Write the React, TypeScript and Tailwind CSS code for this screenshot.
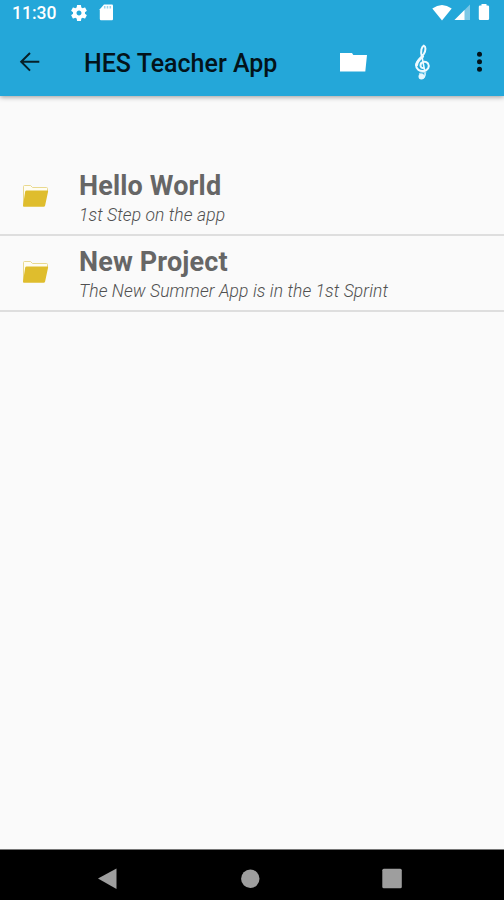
import type { ReactNode } from "react"

interface Project {
  id: number
  name: string
  description: string
}

const projects: Project[] = [
  { id: 1, name: "Hello World", description: "1st Step on the app" },
  { id: 2, name: "New Project", description: "The New Summer App is in the 1st Sprint" },
]

function StatusBar() {
  return (
    <div className="flex h-[26px] items-center pl-3 text-white">
      <span className="w-[59px] text-[17.5px] leading-[26px] font-medium whitespace-nowrap">11:30</span>
      <svg className="mt-[-1px] h-[16px] w-[16px]" viewBox="2 2 20 20" fill="currentColor">
        <path d="M19.43 12.98c.04-.32.07-.64.07-.98s-.03-.66-.07-.98l2.11-1.65c.19-.15.24-.42.12-.64l-2-3.46c-.12-.22-.39-.3-.61-.22l-2.49 1c-.52-.4-1.08-.73-1.69-.98l-.38-2.65C14.46 2.18 14.25 2 14 2h-4c-.25 0-.46.18-.49.42l-.38 2.65c-.61.25-1.17.59-1.69.98l-2.49-1c-.23-.09-.49 0-.61.22l-2 3.46c-.13.22-.07.49.12.64l2.11 1.65c-.04.32-.07.65-.07.98s.03.66.07.98l-2.11 1.65c-.19.15-.24.42-.12.64l2 3.46c.12.22.39.3.61.22l2.49-1c.52.4 1.08.73 1.69.98l.38 2.65c.03.24.24.42.49.42h4c.25 0 .46-.18.49-.42l.38-2.65c.61-.25 1.17-.59 1.69-.98l2.49 1c.23.09.49 0 .61-.22l2-3.46c.12-.22.07-.49-.12-.64l-2.11-1.65zM12 15.1c-1.7 0-3.1-1.4-3.1-3.1s1.4-3.1 3.1-3.1 3.1 1.4 3.1 3.1-1.4 3.1-3.1 3.1z" />
      </svg>
      <svg className="mt-[-1px] ml-[12px] h-[17px] w-[15px]" viewBox="0 0 15 17">
        <path d="M5 .5h8q1 0 1 1.300V15q0 1.300-1 1.300H2Q.8 16.300.8 15V5.200z" fill="#fff" />
        <path d="M5.7 2v2.5M8.500 2v2.500M11.300 2v2.500" stroke="#9bd3ea" strokeWidth="1.500" />
      </svg>
      <svg className="mt-[-2px] ml-auto h-[17px] w-[20px]" viewBox="0 0 20 17">
        <path d="M.3 4.5Q10-2.5 19.7 4.5L10 16.5z" fill="#fff" />
      </svg>
      <svg className="mt-[-1px] ml-[2px] h-[17px] w-[17px]" viewBox="0 0 17 17">
        <path d="M16 .5V16H.5z" fill="#7cc8e6" />
        <path d="M10.5 6V16H.5z" fill="#fff" />
      </svg>
      <svg className="mt-[-2px] mr-[14px] ml-[7px] h-[18px] w-[12px]" viewBox="0 0 12 18">
        <path d="M3.5 1h5v1.5h1.300q1.300 0 1.300 1.300v12q0 1.300-1.300 1.300H2.100Q.8 17.100.8 15.800v-12q0-1.300 1.300-1.300h1.400z" fill="#fff" />
      </svg>
    </div>
  )
}

function TrebleClef() {
  return (
    <svg className="h-[38px] w-[17px]" viewBox="0 0 17 38" fill="none" stroke="#eefaff" strokeLinecap="round">
      <path d="M7.8 13.5C6.3 8 7.6 3.8 9.8 2.6C12 3.5 12 7.5 9.8 11C7.3 14.5 2.2 17.5 2 22C2 26.5 6 28.6 9.5 28C14 27.3 16 23.6 14 20.5C11.5 17.5 6.3 18.7 6.5 22.5C6.6 24.3 8 25.2 9.3 25" strokeWidth="2" />
      <path d="M7.8 12.5L11 29.5C11.7 33.8 9.7 35.5 7.3 35.3" strokeWidth="1.5" />
      <path d="M2.8 22C3 18.5 6 16 8.8 13.5" strokeWidth="2.6" />
      <path d="M5.5 30.5C7.5 29.5 10 30 12 29" stroke="#a5dcf2" strokeWidth="1.2" />
      <circle cx="7.4" cy="33.5" r="2.9" fill="#e5f6fd" stroke="none" />
    </svg>
  )
}

function Toolbar() {
  return (
    <div className="flex h-[70px] items-center pb-px">
      <svg className="mt-[3px] ml-[19px] h-[22px] w-[22px]" viewBox="0 0 22 22" fill="none" stroke="#062029" strokeWidth="2">
        <path d="M20.3 10.8H2.2M11 2L2.2 10.8L11 19.6" />
      </svg>
      <h1 className="ml-[43px] w-[212px] pt-[7px] text-[25px] leading-8 font-medium whitespace-nowrap text-[#03131a]">
        HES Teacher App
      </h1>
      <svg className="mt-[3px] ml-[42.5px] h-[22px] w-[29px]" viewBox="0 0 29 22">
        <path d="M1 2h12l1.3 2H28l-1.7 16.500H1z" fill="#fff" />
      </svg>
      <div className="mt-[3px] ml-[46.5px]">
        <TrebleClef />
      </div>
      <svg className="mt-[3px] ml-[46px] h-[22px] w-[6px]" viewBox="0 0 6 22" fill="#03131a">
        <circle cx="2.5" cy="3.3" r="2.500" />
        <circle cx="2.5" cy="10.8" r="2.500" />
        <circle cx="2.5" cy="18.3" r="2.500" />
      </svg>
    </div>
  )
}

function FolderIcon() {
  return (
    <svg className="h-[25px] w-[27px]" viewBox="0 0 27 25">
      <path d="M1.5 21V2.5q0-1 1-1h6l2 2h14q1 0 1 1V7" fill="#fffdf2" stroke="#e9d98f" strokeWidth="1" />
      <path d="M4.5 6.500h20.800q1 0 .8 1l-3 14q-.3 1.200-1.500 1.200H2Q.8 22.700 1 21.500L3.200 7.500q.2-1 1.300-1z" fill="#dfbd2d" />
    </svg>
  )
}

function ProjectRow({ project }: { project: Project }) {
  return (
    <li className="flex h-[76px] border-b-2 border-[#dedede] pl-[22px]">
      <div className="w-[57px] pt-[24px]">
        <FolderIcon />
      </div>
      <div className="whitespace-nowrap text-[#666]">
        <h2 className="pt-[10px] text-[27px] leading-8 font-bold tracking-[0.15px]">{project.name}</h2>
        <p className="text-[17.5px] leading-[26px] font-light tracking-[0.09px] text-[#505050] italic">{project.description}</p>
      </div>
    </li>
  )
}

function NavButton({ children }: { children: ReactNode }) {
  return (
    <button className="flex h-6 w-6 items-center justify-center">
      <svg className="h-6 w-6" viewBox="0 0 24 24" fill="#9e9e9e">
        {children}
      </svg>
    </button>
  )
}

export default function App() {
  return (
    <div className="flex h-[900px] w-[504px] flex-col overflow-hidden bg-[#fafafa] font-['Roboto',sans-serif]">
      <header className="h-24 bg-[#24a7d9] shadow-[0_1px_5px_rgba(0,0,0,0.4)]">
        <StatusBar />
        <Toolbar />
      </header>
      <ul className="flex-1 pt-[64px]">
        {projects.map((project) => (
          <ProjectRow key={project.id} project={project} />
        ))}
      </ul>
      <nav className="flex h-[51px] items-center border-t border-[#777] bg-black pt-[7px] pl-[95px]">
        <NavButton>
          <path d="M3 11.5L21.5 1.5v20.500z" />
        </NavButton>
        <div className="ml-[119px]">
          <NavButton>
            <circle cx="12.300" cy="11.7" r="9.2" />
          </NavButton>
        </div>
        <div className="ml-[118px]">
          <NavButton>
            <rect x="2.300" y="1.7" width="19.500" height="19.500" rx="1.500" />
          </NavButton>
        </div>
      </nav>
    </div>
  )
}
